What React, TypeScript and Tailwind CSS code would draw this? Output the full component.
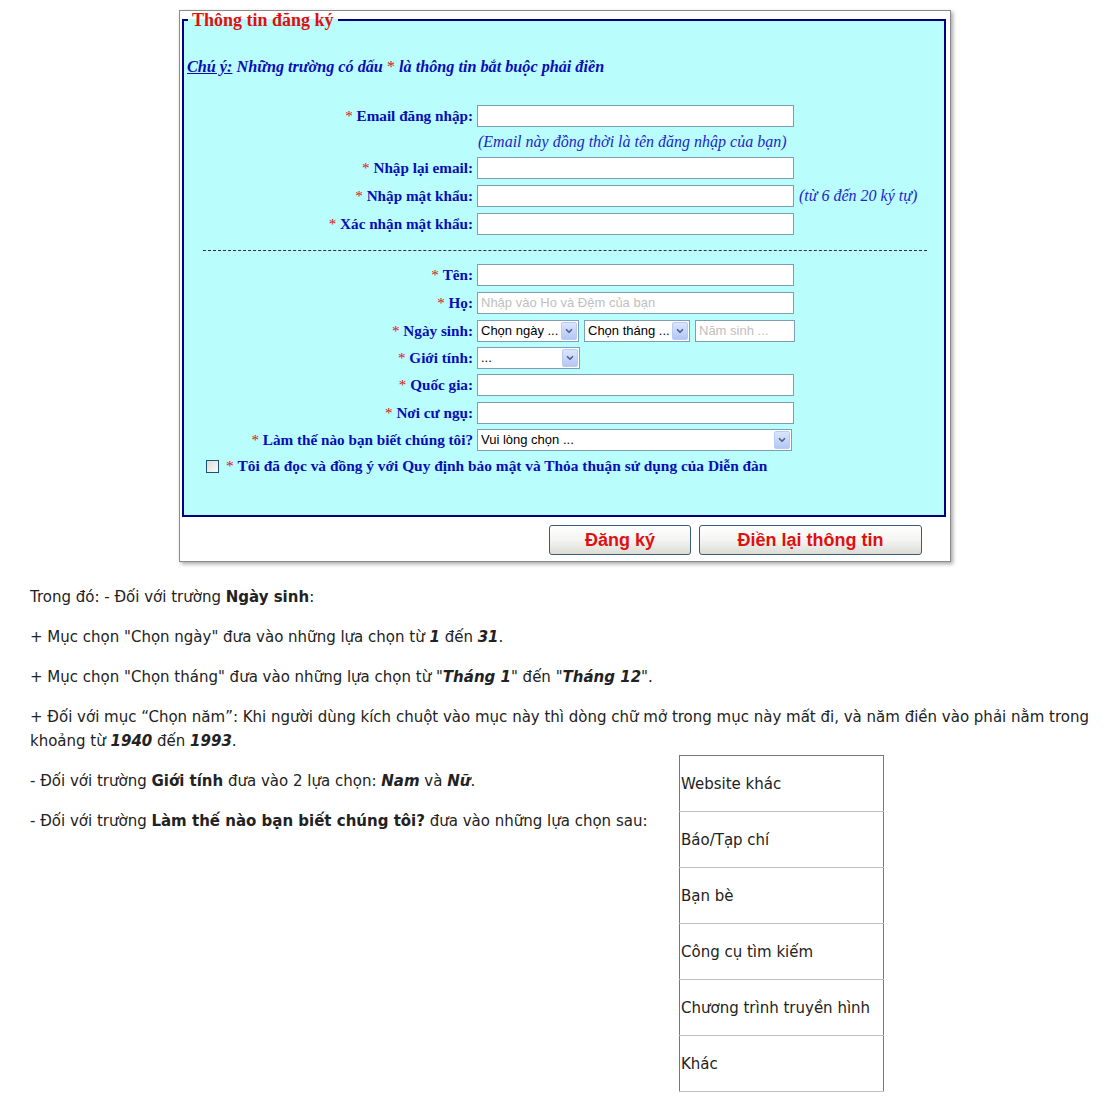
import { ChevronDown } from "lucide-react";

const serif = "font-['Liberation_Serif',serif]";
const sans = "font-['Liberation_Sans',Arial,sans-serif]";

function Star() {
  return <span className="text-[#e01010] font-normal">* </span>;
}

function BI({ children }: { children: React.ReactNode }) {
  return <b className="italic">{children}</b>;
}

function TextBox({ width = "w-[317px]", placeholder }: { width?: string; placeholder?: string }) {
  return (
    <div
      className={`${width} h-[22px] bg-white border border-[#7f9db9] flex items-center px-[3px] text-[13px] text-[#c0c0c0] ${sans}`}
    >
      {placeholder}
    </div>
  );
}

function Select({ width, value }: { width: string; value: string }) {
  return (
    <div
      className={`${width} h-[22px] bg-white border border-[#7f9db9] flex items-center justify-between pl-[3px] pr-[1px] text-[13px] text-black ${sans}`}
    >
      <span className="truncate">{value}</span>
      <span className="w-[16px] h-[18px] rounded-[2px] border border-[#b8cbf7] bg-gradient-to-b from-[#dbe5fd] to-[#b4c6f5] flex items-center justify-center shrink-0">
        <ChevronDown className="w-[10px] h-[10px] text-[#4d6185]" strokeWidth={4} />
      </span>
    </div>
  );
}

function Row({
  label,
  h = "h-[28px]",
  children,
}: {
  label: string;
  h?: string;
  children: React.ReactNode;
}) {
  return (
    <div className={`flex items-center ${h}`}>
      <div className="w-[289px] text-right font-bold text-[15.2px] text-[#0c0cb5] whitespace-nowrap">
        <Star />
        {label}
      </div>
      <div className="ml-[4px] flex items-center gap-[5px]">{children}</div>
    </div>
  );
}

export default function App() {
  return (
    <div className="w-[1116px] min-h-[1097px] bg-white pt-[10px]">
      {/* form screenshot */}
      <div className="ml-[179px] w-[772px] border border-[#8a8a8a] bg-white shadow-[2px_2px_4px_rgba(0,0,0,0.35)] pb-[6px]">
        <fieldset className={`ml-[2px] w-[764px] border-2 border-[#000080] bg-[#b9fdfd] pb-[36px] ${serif}`}>
          <legend className="ml-[4px] px-[4px] text-[18px] leading-[18px] font-bold text-[#e01010]">
            Thông tin đăng ký
          </legend>

          <div className="mt-[28px] ml-[3px] h-[20px] leading-[20px] italic font-bold text-[16.2px] text-[#0c0cb5]">
            <span className="underline">Chú ý:</span> Những trường có dấu{" "}
            <span className="text-[#e01010] font-normal not-italic">*</span> là thông tin bắt buộc phải điền
          </div>

          <div className="mt-[25px]">
            <Row label="Email đăng nhập:">
              <TextBox />
            </Row>
            <div className="h-[24px] flex items-center pl-[294px] italic text-[16px] text-[#2424c8]">
              (Email này đồng thời là tên đăng nhập của bạn)
            </div>
            <Row label="Nhập lại email:">
              <TextBox />
            </Row>
            <Row label="Nhập mật khẩu:">
              <TextBox />
              <span className="italic text-[16px] text-[#2424c8]">(từ 6 đến 20 ký tự)</span>
            </Row>
            <Row label="Xác nhận mật khẩu:">
              <TextBox />
            </Row>
          </div>

          <div className="mt-[12px] mb-[10px] ml-[19px] w-[724px] border-t border-dashed border-[#333]" />

          <Row label="Tên:">
            <TextBox />
          </Row>
          <Row label="Họ:">
            <TextBox placeholder="Nhập vào Ho và Đệm của bạn" />
          </Row>
          <Row label="Ngày sinh:">
            <Select width="w-[102px]" value="Chọn ngày ..." />
            <Select width="w-[106px]" value="Chọn tháng ..." />
            <TextBox width="w-[100px]" placeholder="Năm sinh ..." />
          </Row>
          <Row label="Giới tính:" h="h-[26px]">
            <Select width="w-[103px]" value="..." />
          </Row>
          <Row label="Quốc gia:">
            <TextBox />
          </Row>
          <Row label="Nơi cư ngụ:">
            <TextBox />
          </Row>
          <Row label="Làm thế nào bạn biết chúng tôi?" h="h-[26px]">
            <Select width="w-[315px]" value="Vui lòng chọn ..." />
          </Row>
          <div className="flex items-center h-[26px] pl-[22px] font-bold text-[15.4px] text-[#0c0cb5]">
            <span className="w-[13px] h-[13px] border border-[#1c5180] bg-gradient-to-br from-[#dcdcd7] to-[#fbfbf9] mr-[7px]" />
            <span className="whitespace-nowrap">
              <Star />
              Tôi đã đọc và đồng ý với Quy định bảo mật và Thỏa thuận sử dụng của Diễn đàn
            </span>
          </div>
        </fieldset>

        <div className="flex gap-[8px] pl-[369px] mt-[8px]">
          {["Đăng ký", "Điền lại thông tin"].map((t, i) => (
            <button
              key={t}
              className={`${i === 0 ? "w-[142px]" : "w-[223px]"} h-[30px] rounded-[3px] border border-[#3c5a7c] bg-gradient-to-b from-white via-[#f4f4f2] to-[#dcdcd6] text-[18px] font-bold text-[#e01010] ${sans}`}
            >
              {t}
            </button>
          ))}
        </div>
      </div>

      {/* description */}
      <div className="pl-[30px] mt-[23px] text-[15px] leading-[24px] text-[#222] font-['DejaVu_Sans',Verdana,sans-serif]">
        <p className="mb-[16px]">
          Trong đó: - Đối với trường <b>Ngày sinh</b>:
        </p>
        <p className="mb-[16px]">
          + Mục chọn "Chọn ngày" đưa vào những lựa chọn từ <BI>1</BI> đến <BI>31</BI>.
        </p>
        <p className="mb-[16px]">
          + Mục chọn "Chọn tháng" đưa vào những lựa chọn từ "<BI>Tháng 1</BI>" đến "<BI>Tháng 12</BI>".
        </p>
        <p className="mb-[2px] pr-[10px]">
          <span>
            + Đối với mục “Chọn năm”: Khi người dùng kích chuột vào mục này thì dòng chữ mở trong mục này mất đi, và năm điền vào phải nằm trong
          </span>{" "}
          <span>khoảng từ</span> <BI>1940</BI> <span>đến</span> <BI>1993</BI>.
        </p>
        <div className="flex">
          <div className="w-[649px] pt-[14px]">
            <p className="mb-[16px] whitespace-nowrap">
              - Đối với trường <b>Giới tính</b> đưa vào 2 lựa chọn: <BI>Nam</BI> và <BI>Nữ</BI>.
            </p>
            <p className="whitespace-nowrap">
              - Đối với trường <b>Làm thế nào bạn biết chúng tôi?</b> đưa vào những lựa chọn sau:
            </p>
          </div>
          <table className="w-[205px] border border-[#777] border-collapse">
            <tbody>
              {["Website khác", "Báo/Tạp chí", "Bạn bè", "Công cụ tìm kiếm", "Chương trình truyền hình", "Khác"].map((r) => (
                <tr key={r} className="h-[56px] border-b border-[#c0c0c0]">
                  <td className="pl-[1px] align-middle whitespace-nowrap">{r}</td>
                </tr>
              ))}
            </tbody>
          </table>
        </div>
      </div>
    </div>
  );
}
